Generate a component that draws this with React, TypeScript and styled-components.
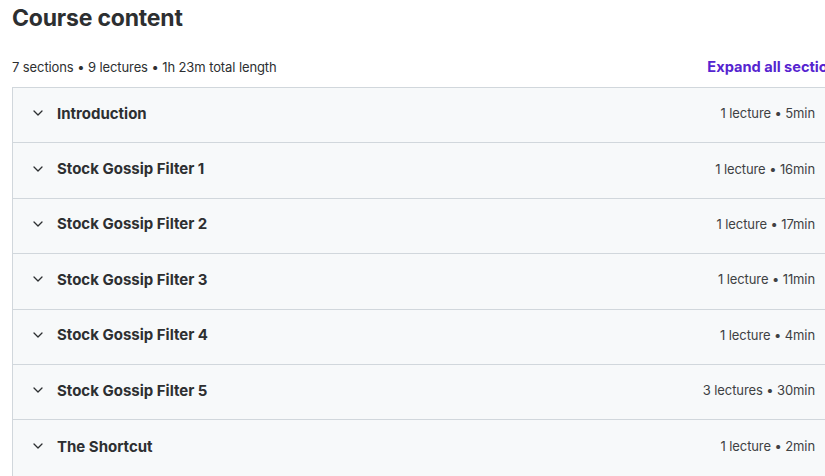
import React from "react";
import styled, { createGlobalStyle } from "styled-components";

type Section = {
  title: string;
  meta: string;
};

const sections: Section[] = [
  { title: "Introduction", meta: "1 lecture • 5min" },
  { title: "Stock Gossip Filter 1", meta: "1 lecture • 16min" },
  { title: "Stock Gossip Filter 2", meta: "1 lecture • 17min" },
  { title: "Stock Gossip Filter 3", meta: "1 lecture • 11min" },
  { title: "Stock Gossip Filter 4", meta: "1 lecture • 4min" },
  { title: "Stock Gossip Filter 5", meta: "3 lectures • 30min" },
  { title: "The Shortcut", meta: "1 lecture • 2min" },
];

const GlobalStyle = createGlobalStyle`
  html, body {
    margin: 0;
    padding: 0;
    background: #ffffff;
    overflow: hidden;
  }
  body {
    font-family: Inter, "Noto Sans", sans-serif;
    color: #2d2f31;
  }
`;

export default function App() {
  return (
    <>
      <GlobalStyle />
      <Page>
        <Title>Course content</Title>
        <Summary>
          <SummaryText>7 sections • 9 lectures • 1h 23m total length</SummaryText>
          <ExpandLink>Expand all sections</ExpandLink>
        </Summary>
        <Panel>
          {sections.map((s) => (
            <Row key={s.title}>
              <RowLeft>
                <Chevron viewBox="0 0 10 6">
                  <polyline points="1,1 5,5 9,1" />
                </Chevron>
                <RowTitle>{s.title}</RowTitle>
              </RowLeft>
              <RowMeta>{s.meta}</RowMeta>
            </Row>
          ))}
        </Panel>
      </Page>
    </>
  );
}

const Page = styled.div`
  width: 827px;
  padding: 4px 0 0 12px;
`;

const Title = styled.h2`
  margin: 0;
  font-size: 23px;
  font-weight: 700;
  letter-spacing: -0.2px;
  line-height: 28px;
  color: #2d2f31;
`;

const Summary = styled.div`
  display: flex;
  align-items: center;
  justify-content: space-between;
  margin-top: 26px;
  height: 17px;
  margin-bottom: 12px;
`;

const SummaryText = styled.span`
  font-size: 13px;
  color: #2d2f31;
  letter-spacing: -0.1px;
`;

const ExpandLink = styled.a`
  margin-right: -6px;
  font-size: 14.6px;
  font-weight: 700;
  color: #5624d0;
  letter-spacing: 0;
  cursor: pointer;
`;

const Panel = styled.div`
  border: 1px solid #d1d7dc;
  border-right: none;
`;

const Row = styled.div`
  box-sizing: border-box;
  height: 55.4px;
  display: flex;
  align-items: center;
  justify-content: space-between;
  padding: 0 24px 4px 20px;
  background: #f7f9fa;
  border-bottom: 1px solid #d1d7dc;

  &:last-child {
    border-bottom: none;
  }
`;

const RowLeft = styled.div`
  display: flex;
  align-items: center;
  gap: 14px;
`;

const Chevron = styled.svg`
  width: 10px;
  height: 6px;
  fill: none;
  stroke: #2d2f31;
  stroke-width: 1.3;
  stroke-linecap: round;
  stroke-linejoin: round;
`;

const RowTitle = styled.span`
  font-size: 15px;
  font-weight: 700;
  letter-spacing: 0;
  color: #2d2f31;
`;

const RowMeta = styled.span`
  font-size: 13px;
  color: #3e4143;
  letter-spacing: -0.1px;
`;
